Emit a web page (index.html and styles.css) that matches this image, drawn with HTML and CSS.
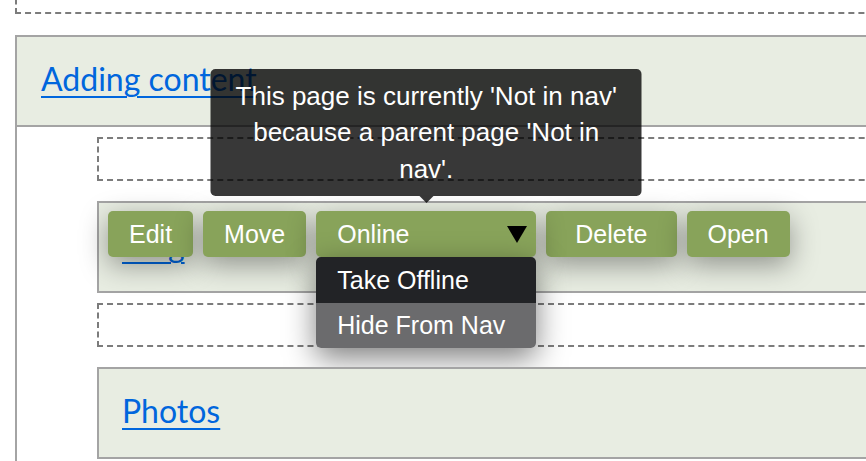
FILE: index.html
```html
<!DOCTYPE html>
<html lang="en">
<head>
<meta charset="utf-8">
<title>Pages</title>
<link rel="stylesheet" href="styles.css">
</head>
<body>
<div class="tree">
  <div class="drop drop-top"></div>
  <div class="node">
    <div class="row head"><a class="link" href="#">Adding content</a></div>
    <div class="children">
      <div class="drop"></div>
      <div class="row active">
        <a class="link" href="#">Blog</a>
        <div class="toolbar">
          <button class="btn">Edit</button>
          <button class="btn">Move</button>
          <div class="select-wrap">
            <button class="btn select"><span>Online</span>
              <svg class="caret" width="20" height="17" viewBox="0 0 20 17"><polygon points="0,0 20,0 10,17" fill="#000"/></svg>
            </button>
            <div class="tooltip">This page is currently 'Not in nav' because a parent page 'Not in nav'.</div>
            <ul class="menu">
              <li class="menu-item hover">Take Offline</li>
              <li class="menu-item">Hide From Nav</li>
            </ul>
          </div>
          <button class="btn btn-wide">Delete</button>
          <button class="btn">Open</button>
        </div>
      </div>
      <div class="drop"></div>
      <div class="row"><a class="link" href="#">Photos</a></div>
    </div>
  </div>
</div>
</body>
</html>
```
FILE: styles.css
```css
html, body {
  margin: 0;
  padding: 0;
  background: #fff;
  overflow: hidden;
}
body {
  width: 866px;
  height: 461px;
  font-family: "Liberation Sans", Arial, sans-serif;
}
.tree {
  width: 1000px;
  padding-left: 15px;
}
.drop {
  box-sizing: border-box;
  height: 44px;
  border: 2px dashed #7c7c7c;
  margin: 10px 0 20px;
}
.drop-top {
  margin: -30px 0 21px;
}
.node {
  border: 2px solid #a4a4a4;
  border-right: none;
  border-bottom: none;
  padding-bottom: 40px;
}
.row {
  position: relative;
  height: 88px;
  padding: 0 23px;
  background: #e8ede2;
  border: 2px solid #a4a4a4;
  border-right: none;
}
.row.head {
  border: none;
  border-bottom: 2px solid #a4a4a4;
  padding-left: 24px;
}
.children {
  margin-left: 80px;
}
.link {
  display: inline-block;
  padding-top: 22px;
  font-family: Lato, "Liberation Sans", sans-serif;
  font-size: 32px;
  line-height: 40px;
  color: #0066dd;
  text-decoration: underline;
  text-decoration-thickness: 2px;
  text-underline-offset: 5px;
}
.toolbar {
  position: absolute;
  top: 8px;
  left: 9px;
  display: flex;
  gap: 10px;
}
.btn {
  display: flex;
  align-items: center;
  height: 46px;
  padding: 0 21px;
  border: none;
  border-radius: 5px;
  background: #88a35a;
  color: #fff;
  font-family: "Liberation Sans", Arial, sans-serif;
  font-size: 25px;
  box-shadow: 0 8px 28px rgba(0, 0, 0, 0.38);
}
.btn-wide {
  padding: 0 29px;
}
.select-wrap {
  position: relative;
}
.select {
  width: 220px;
  justify-content: space-between;
  padding-right: 9px;
}
.caret {
  display: block;
}
.tooltip {
  position: absolute;
  left: 50%;
  bottom: calc(100% + 15px);
  transform: translateX(-50%);
  box-sizing: border-box;
  width: 431px;
  padding: 9px 18px;
  border-radius: 5px;
  background: rgba(0, 0, 0, 0.78);
  color: #fff;
  font-size: 26px;
  line-height: 36.4px;
  text-align: center;
}
.tooltip::after {
  content: "";
  position: absolute;
  left: 50%;
  top: 100%;
  margin-left: -7px;
  border: 7px solid transparent;
  border-top-color: rgba(0, 0, 0, 0.78);
  border-bottom: none;
}
.menu {
  position: absolute;
  left: 0;
  top: 46px;
  width: 220px;
  margin: 0;
  padding: 0;
  list-style: none;
  border-radius: 5px;
  overflow: hidden;
  box-shadow: 0 10px 30px rgba(0, 0, 0, 0.5);
}
.menu-item {
  height: 45px;
  padding-left: 21px;
  display: flex;
  align-items: center;
  background: #6b6b6d;
  color: #fff;
  font-size: 25px;
}
.menu-item.hover {
  height: 46px;
  background: #222326;
}
```
